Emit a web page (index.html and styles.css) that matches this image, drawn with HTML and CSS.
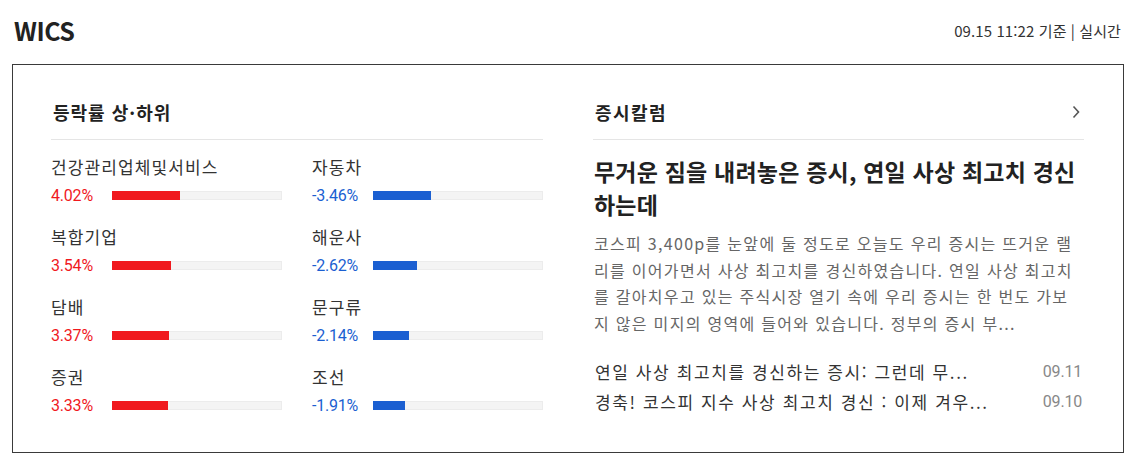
FILE: index.html
```html
<!DOCTYPE html>
<html lang="ko">
<head>
<meta charset="utf-8">
<title>WICS</title>
<link rel="stylesheet" href="styles.css">
</head>
<body>
<div class="top">
  <h1 class="brand">WICS</h1>
  <div class="stamp">09.15 11:22 기준 <span class="sep">|</span> 실시간</div>
</div>
<div class="box">
  <section class="rank">
    <h2 class="sec-head">등락률 상·하위</h2>
    <div class="grid">
      <div class="item"><div class="name">건강관리업체및서비스</div><div class="line"><span class="pct up">4.02%</span><span class="bar"><span class="fill up-bg" style="width:40.2%"></span></span></div></div>
      <div class="item"><div class="name">자동차</div><div class="line"><span class="pct down">-3.46%</span><span class="bar"><span class="fill down-bg" style="width:34.6%"></span></span></div></div>
      <div class="item"><div class="name">복합기업</div><div class="line"><span class="pct up">3.54%</span><span class="bar"><span class="fill up-bg" style="width:35.4%"></span></span></div></div>
      <div class="item"><div class="name">해운사</div><div class="line"><span class="pct down">-2.62%</span><span class="bar"><span class="fill down-bg" style="width:26.2%"></span></span></div></div>
      <div class="item"><div class="name">담배</div><div class="line"><span class="pct up">3.37%</span><span class="bar"><span class="fill up-bg" style="width:33.7%"></span></span></div></div>
      <div class="item"><div class="name">문구류</div><div class="line"><span class="pct down">-2.14%</span><span class="bar"><span class="fill down-bg" style="width:21.4%"></span></span></div></div>
      <div class="item"><div class="name">증권</div><div class="line"><span class="pct up">3.33%</span><span class="bar"><span class="fill up-bg" style="width:33.3%"></span></span></div></div>
      <div class="item"><div class="name">조선</div><div class="line"><span class="pct down">-1.91%</span><span class="bar"><span class="fill down-bg" style="width:19.1%"></span></span></div></div>
    </div>
  </section>
  <section class="column">
    <div class="sec-head head-row">
      <h2 class="sec-title">증시칼럼</h2>
      <svg class="chev" width="8" height="14" viewBox="0 0 8 14"><polyline points="1.5,1.5 6.5,7 1.5,12.5" fill="none" stroke="#555" stroke-width="1.6"/></svg>
    </div>
    <h3 class="headline">무거운 짐을 내려놓은 증시, 연일 사상 최고치 경신 하는데</h3>
    <p class="summary">코스피 3,400p를 눈앞에 둘 정도로 오늘도 우리 증시는 뜨거운 랠리를 이어가면서 사상 최고치를 경신하였습니다. 연일 사상 최고치를 갈아치우고 있는 주식시장 열기 속에 우리 증시는 한 번도 가보지 않은 미지의 영역에 들어와 있습니다. 정부의 증시 부...</p>
    <ul class="list">
      <li><span class="ttl">연일 사상 최고치를 경신하는 증시: 그런데 무...</span><span class="date">09.11</span></li>
      <li><span class="ttl">경축! 코스피 지수 사상 최고치 경신 : 이제 겨우...</span><span class="date">09.10</span></li>
    </ul>
  </section>
</div>
</body>
</html>
```
FILE: styles.css
```css
* { box-sizing: border-box; }
body {
  margin: 0;
  font-family: "Noto Sans CJK KR", "Noto Sans", sans-serif;
  color: #333;
  background: #fff;
}
.top {
  display: flex;
  justify-content: space-between;
  align-items: center;
  height: 64px;
  padding: 0 14px 4px 14px;
}
.brand {
  margin: 0;
  font-size: 25px;
  font-weight: 700;
  color: #222;
  letter-spacing: -0.5px;
}
.stamp {
  font-size: 15px;
  color: #333;
  letter-spacing: 0.1px;
}
.box {
  margin: 0 11px 0 12px;
  height: 389px;
  border: 1px solid #3a3a3a;
  padding: 0 38px 0 38px;
  display: grid;
  grid-template-columns: 492px 492px;
  column-gap: 49px;
}
.sec-head {
  margin: 0;
  padding: 35px 0 15px 2px;
  line-height: 24px;
  font-size: 18px;
  font-weight: 700;
  color: #222;
  letter-spacing: 1px;
  border-bottom: 1px solid #e5e5e5;
}
.head-row {
  display: flex;
  justify-content: space-between;
  align-items: center;
  padding-left: 2px;
  padding-right: 4px;
}
.sec-title { margin: 0; font-size: 18px; font-weight: 700; line-height: 24px; letter-spacing: 1.4px; }
.grid {
  display: grid;
  grid-template-columns: 231px 231px;
  column-gap: 30px;
  row-gap: 18px;
  padding-top: 15px;
}
.name {
  font-size: 17px;
  line-height: 24px;
  color: #333;
  letter-spacing: 1.1px;
}
.line {
  display: flex;
  align-items: center;
  margin-top: 4px;
  height: 24px;
}
.pct {
  width: 61px;
  font-family: Roboto, "Noto Sans", sans-serif;
  font-size: 16px;
  letter-spacing: -0.2px;
}
.up { color: #f0191e; }
.down { color: #1b5fd1; }
.bar {
  width: 170px;
  height: 9px;
  background: #f4f4f4;
  border: 1px solid #ececec;
  display: flex;
}
.fill { height: 9px; margin: -1px 0 0 -1px; }
.up-bg { background: #f0191e; }
.down-bg { background: #1b5fd1; }
.column { padding-left: 1px; }
.headline {
  margin: 15px 0 0;
  padding-left: 1px;
  font-size: 23px;
  line-height: 33px;
  font-weight: 700;
  color: #222;
  letter-spacing: 0.2px;
}
.summary {
  margin: 9px 0 0;
  padding-left: 1px;
  font-size: 16px;
  line-height: 26.7px;
  color: #666;
  word-break: break-all;
  letter-spacing: 1.3px;
}
.list {
  list-style: none;
  margin: 20px 0 0;
  padding: 0 0 0 2px;
}
.list li {
  display: flex;
  justify-content: space-between;
  line-height: 30px;
  font-size: 17px;
}
.ttl { color: #333; letter-spacing: 1.6px; }
.date {
  font-family: Roboto, "Noto Sans", sans-serif;
  color: #888;
  font-size: 16px;
  letter-spacing: -0.2px;
  padding-right: 2px;
}
```
